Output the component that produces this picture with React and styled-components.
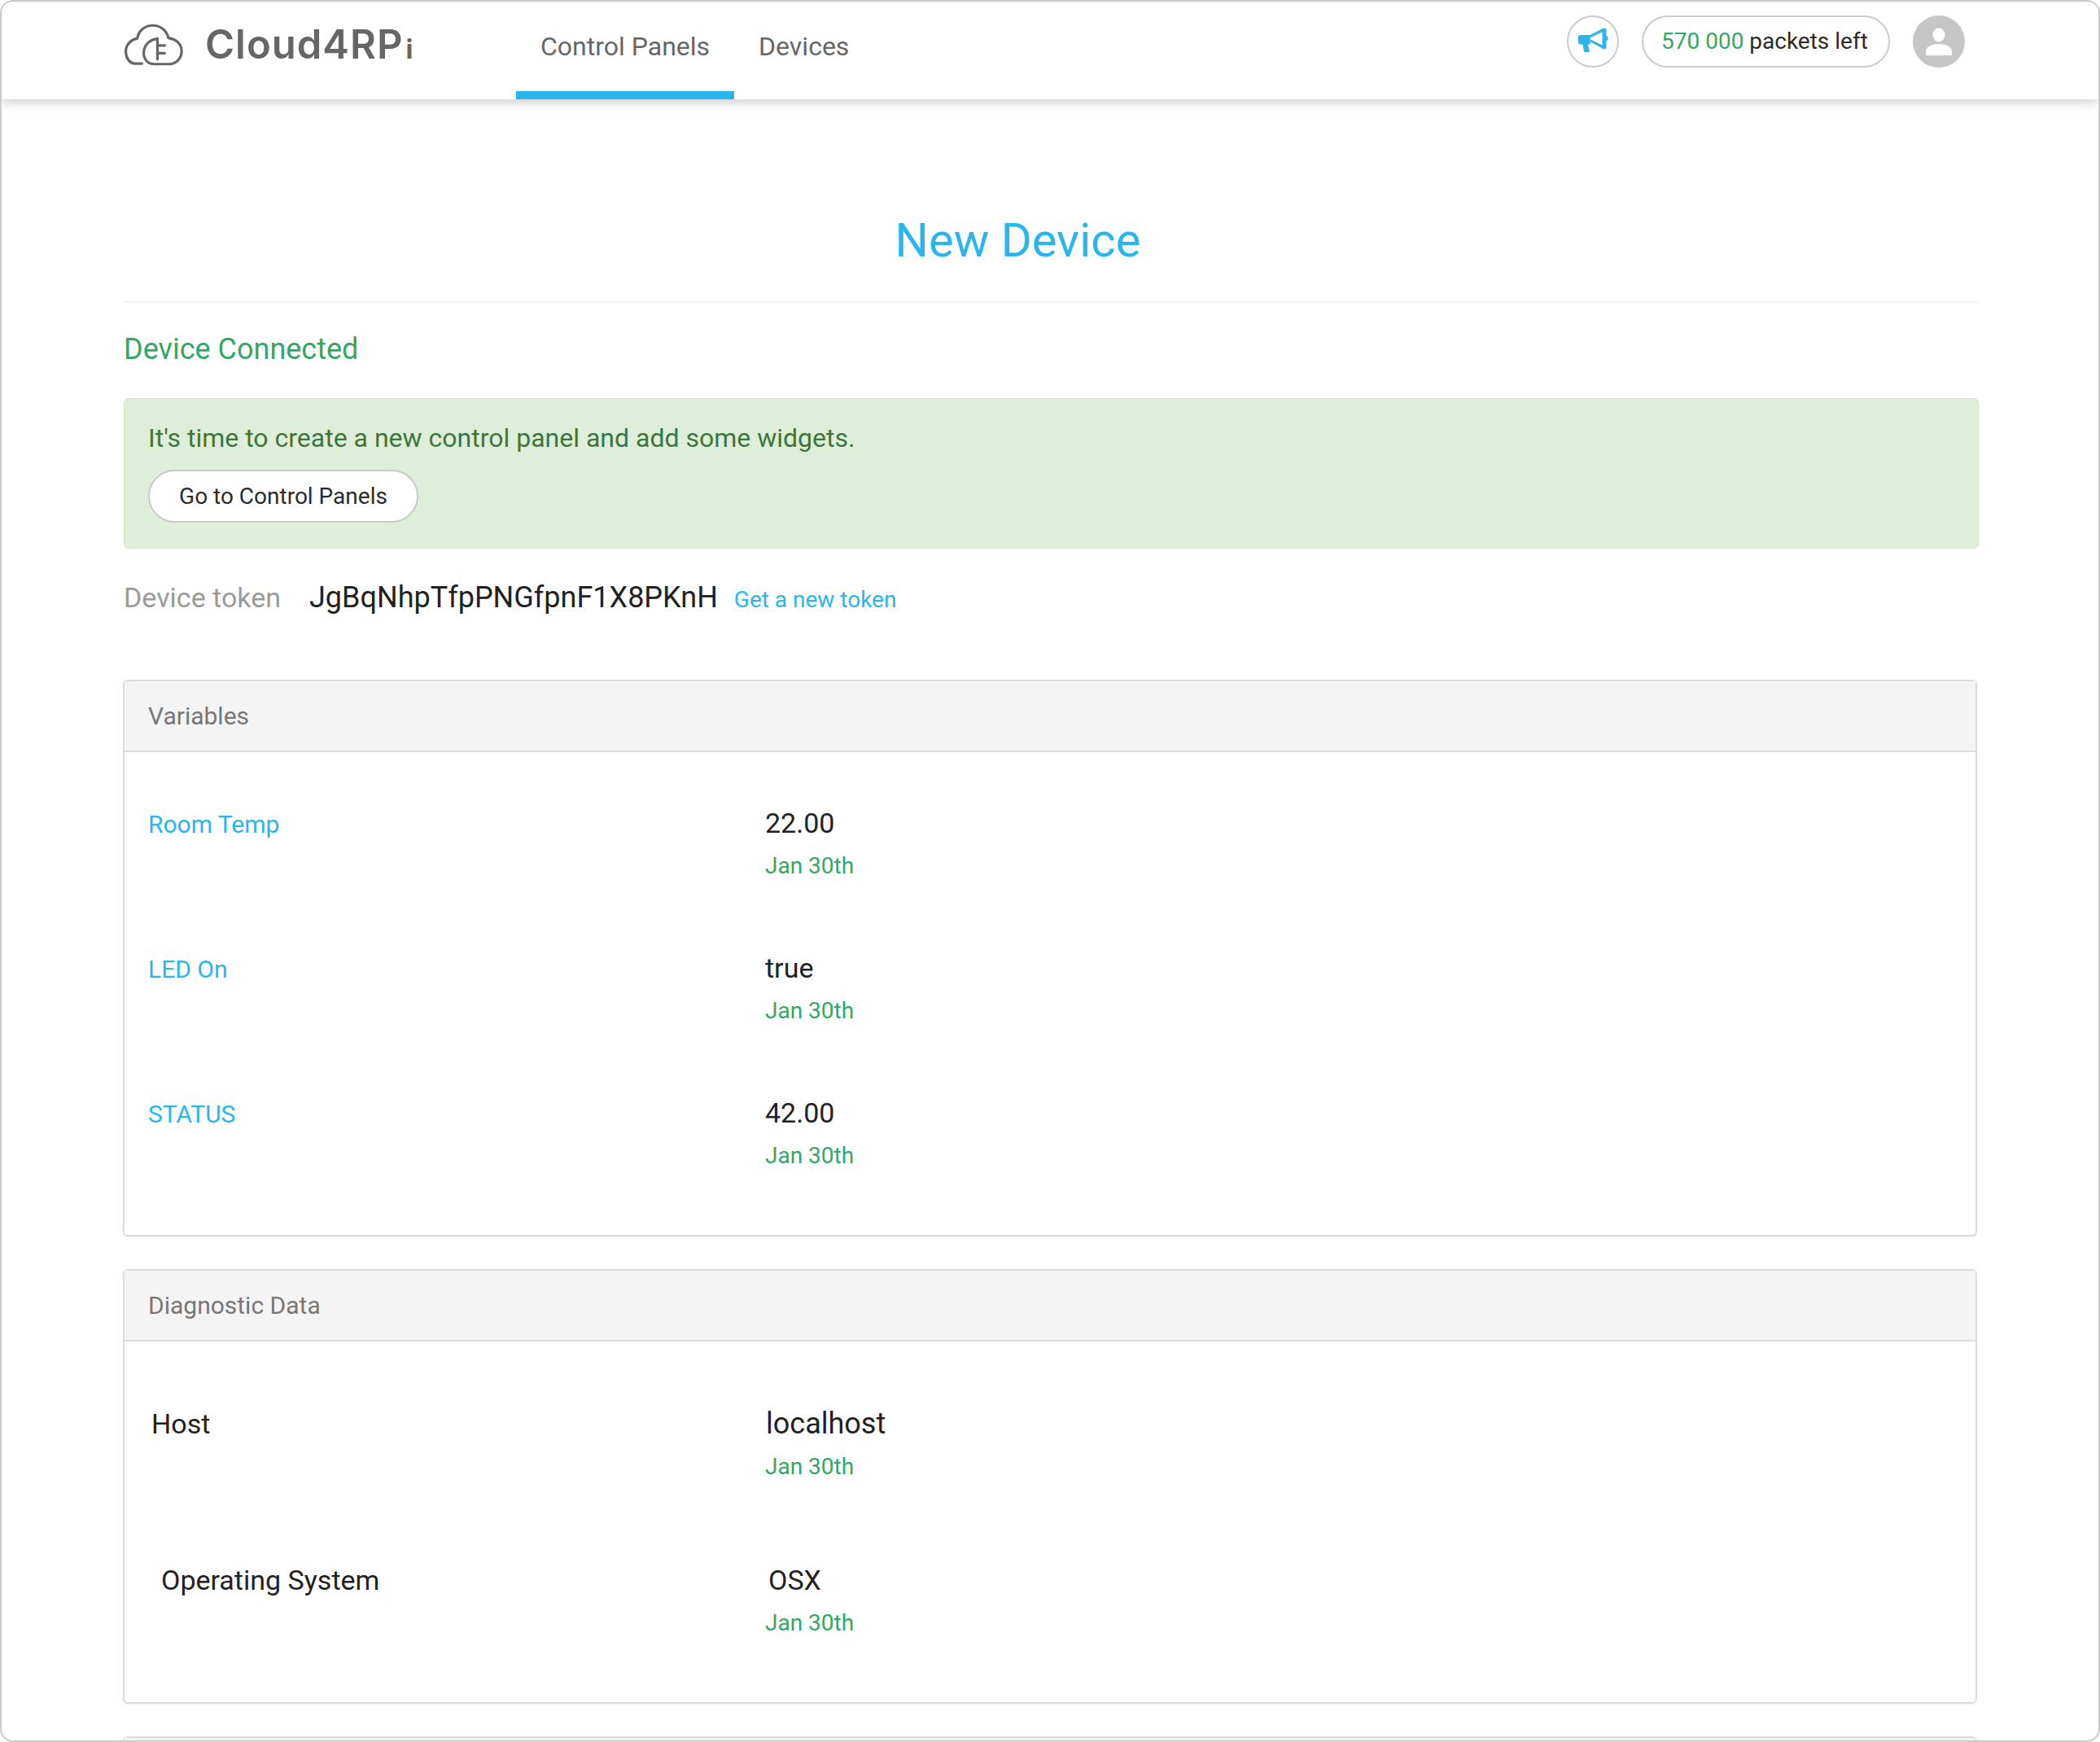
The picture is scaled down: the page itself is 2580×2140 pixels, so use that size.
import React from "react";
import styled, { createGlobalStyle } from "styled-components";

const Global = createGlobalStyle`
  html, body { margin: 0; padding: 0; background: #fff; }
  body { font-family: Roboto, "Liberation Sans", sans-serif; }
  * { box-sizing: border-box; }
`;

const Frame = styled.div`
  width: 2580px;
  height: 2140px;
  border: 2px solid #cbcbcb;
  border-radius: 16px;
  overflow: hidden;
  background: #fff;
`;

const Header = styled.header`
  display: flex;
  align-items: stretch;
  height: 120px;
  padding: 0 164px 0 150px;
  background: #fff;
  box-shadow: 0 4px 14px rgba(0, 0, 0, 0.2);
  position: relative;
`;

const Brand = styled.div`
  display: flex;
  align-items: center;
  width: 482px;
  padding-bottom: 14px;
`;

const BrandName = styled.span`
  margin: 4px 0 0 26px;
  font-family: Inter, sans-serif;
  font-weight: 600;
  font-size: 49px;
  line-height: 60px;
  color: #666;
  letter-spacing: 1px;
`;

const BrandI = styled.span`
  margin-left: 3px;
  font-size: 33px;
  font-weight: 700;
`;

const Nav = styled.nav`
  display: flex;
`;

const Tab = styled.a`
  display: block;
  padding: 35px 30px 0;
  font-size: 32px;
  line-height: 40px;
  color: #666;
  border-bottom: 10px solid ${(p) => (p.$active ? "#29b5ee" : "transparent")};
`;

const Tools = styled.div`
  display: flex;
  align-items: flex-start;
  margin-left: auto;
  padding-top: 17px;
`;

const RoundButton = styled.div`
  display: flex;
  align-items: center;
  justify-content: center;
  width: 64px;
  height: 64px;
  border: 2px solid #cbcbcb;
  border-radius: 50%;
  padding-bottom: 4px;
`;

const Packets = styled.div`
  margin-left: 28px;
  width: 305px;
  height: 64px;
  padding-left: 22px;
  border: 2px solid #cbcbcb;
  border-radius: 32px;
  font-size: 28px;
  line-height: 60px;
  color: #2b2b2b;
  white-space: nowrap;
`;

const Green = styled.span`
  color: #33a864;
`;

const Avatar = styled.div`
  margin-left: 28px;
  width: 64px;
  height: 64px;
`;

const Main = styled.main`
  padding: 0 147px 0 150px;
`;

const Title = styled.h1`
  margin: 138px 0 0;
  padding: 0 82px 40px 0;
  border-bottom: 2px solid #f3f3f3;
  font-size: 58px;
  font-weight: 400;
  line-height: 70px;
  color: #29b5ee;
  text-align: center;
`;

const Connected = styled.h2`
  margin: 35px 0 0;
  font-size: 36px;
  font-weight: 400;
  line-height: 44px;
  color: #33a864;
`;

const Alert = styled.div`
  margin-top: 38px;
  height: 185px;
  padding: 26px 29px 0;
  border: 1px solid #d3e6c6;
  border-radius: 6px;
  background: #dfeed8;
  color: #3c763d;
  font-size: 32px;
  line-height: 44px;
`;

const PillButton = styled.a`
  display: block;
  width: 332px;
  height: 65px;
  margin-top: 17px;
  border: 2px solid #c9c9c9;
  border-radius: 33px;
  background: #fff;
  color: #2b2b2b;
  font-size: 28px;
  line-height: 61px;
  text-align: center;
`;

const TokenRow = styled.div`
  display: flex;
  align-items: baseline;
  height: 44px;
  margin-top: 38px;
  line-height: 44px;
`;

const TokenLabel = styled.span`
  width: 228px;
  font-size: 34px;
  color: #9a9a9a;
`;

const TokenValue = styled.span`
  font-size: 36px;
  color: #222;
`;

const TokenLink = styled.a`
  margin-left: 20px;
  font-size: 28px;
  color: #29b5ee;
`;

const Panel = styled.section`
  margin: ${(p) => p.$gap}px 2px 0 -1px;
  height: ${(p) => p.$height}px;
  border: 2px solid #dcdcdc;
  border-radius: 6px;
  box-shadow: 0 1px 2px rgba(0, 0, 0, 0.06);
`;

const PanelHead = styled.div`
  height: 87px;
  padding-left: 29px;
  border-bottom: 2px solid #dcdcdc;
  background: #f4f4f4;
  font-size: 30px;
  line-height: 85px;
  color: #777;
`;

const PanelBody = styled.div`
  padding-top: ${(p) => p.$top}px;
`;

const Row = styled.div`
  display: grid;
  grid-template-columns: 758px 1fr;
  min-height: ${(p) => p.$height}px;
  padding-left: 29px;
`;

const VarName = styled.a`
  font-size: 30px;
  line-height: 46px;
  color: #29b5ee;
`;

const DiagName = styled.div`
  padding-left: ${(p) => p.$indent}px;
  font-size: 34px;
  line-height: 42px;
  color: #222;
`;

const Value = styled.div`
  padding-left: ${(p) => p.$indent || 0}px;
  font-size: ${(p) => p.$size || 34}px;
  line-height: 42px;
  color: #222;
`;

const Stamp = styled.div`
  margin-top: 12px;
  font-size: 28px;
  line-height: 40px;
  color: #33a864;
`;

const CloudLogo = () => (
  <svg width="74" height="54" viewBox="60 50 232 165" fill="none" stroke="#666" strokeWidth="10" strokeLinecap="round">
    <path d="M130 205H105C80 205 68 180 68 158C68 130 90 112 112 108C118 75 145 58 172 58C200 58 225 75 232 106C262 110 283 130 283 157C283 185 262 207 235 207H178C152 207 137 187 137 165C137 135 160 110 190 110M190 108V188M190 135H218M190 165H218" />
  </svg>
);

const Megaphone = () => (
  <svg width="40" height="33" viewBox="105 65 120 100" fill="#29b5ee">
    <path d="M120 95H155V130H146L152 152Q153 160 145 160H138Q132 160 131 152L127 130H120Q110 130 110 120V105Q110 95 120 95Z" />
    <path d="M155 95L203 70Q215 68 215 78V140Q215 150 203 147L155 120V111L200 133V84L155 106Z" />
    <rect x="212" y="100" width="9" height="16" rx="4" />
  </svg>
);

const UserIcon = () => (
  <svg width="64" height="64" viewBox="0 0 64 64">
    <circle cx="32" cy="32" r="32" fill="#c6c6c6" />
    <ellipse cx="32" cy="24" rx="7.5" ry="8.5" fill="#fff" />
    <path d="M16 49V44C16 38 25 35 32 35C39 35 48 38 48 44V49Z" fill="#fff" />
  </svg>
);

const variables = [
  ["Room Temp", "22.00"],
  ["LED On", "true"],
  ["STATUS", "42.00"],
];

const diagnostics = [
  { name: "Host", indent: 4, value: "localhost", valueIndent: 1, size: 36 },
  { name: "Operating System", indent: 16, value: "OSX", valueIndent: 4, size: 34 },
];

export default function App() {
  return (
    <>
      <Global />
      <Frame>
        <Header>
          <Brand>
            <CloudLogo />
            <BrandName>
              Cloud4RP<BrandI>i</BrandI>
            </BrandName>
          </Brand>
          <Nav>
            <Tab $active>Control Panels</Tab>
            <Tab>Devices</Tab>
          </Nav>
          <Tools>
            <RoundButton>
              <Megaphone />
            </RoundButton>
            <Packets>
              <Green>570 000</Green> packets left
            </Packets>
            <Avatar>
              <UserIcon />
            </Avatar>
          </Tools>
        </Header>
        <Main>
          <Title>New Device</Title>
          <Connected>Device Connected</Connected>
          <Alert>
            It's time to create a new control panel and add some widgets.
            <PillButton>Go to Control Panels</PillButton>
          </Alert>
          <TokenRow>
            <TokenLabel>Device token</TokenLabel>
            <TokenValue>JgBqNhpTfpPNGfpnF1X8PKnH</TokenValue>
            <TokenLink>Get a new token</TokenLink>
          </TokenRow>
          <Panel $gap={79} $height={684}>
            <PanelHead>Variables</PanelHead>
            <PanelBody $top={66}>
              {variables.map(([name, value]) => (
                <Row key={name} $height={178}>
                  <VarName>{name}</VarName>
                  <div>
                    <Value>{value}</Value>
                    <Stamp>Jan 30th</Stamp>
                  </div>
                </Row>
              ))}
            </PanelBody>
          </Panel>
          <Panel $gap={40} $height={534}>
            <PanelHead>Diagnostic Data</PanelHead>
            <PanelBody $top={80}>
              {diagnostics.map((d) => (
                <Row key={d.name} $height={192}>
                  <DiagName $indent={d.indent}>{d.name}</DiagName>
                  <div>
                    <Value $indent={d.valueIndent} $size={d.size}>{d.value}</Value>
                    <Stamp>Jan 30th</Stamp>
                  </div>
                </Row>
              ))}
            </PanelBody>
          </Panel>
          <Panel $gap={40} $height={200}>
            <PanelHead />
          </Panel>
        </Main>
      </Frame>
    </>
  );
}
